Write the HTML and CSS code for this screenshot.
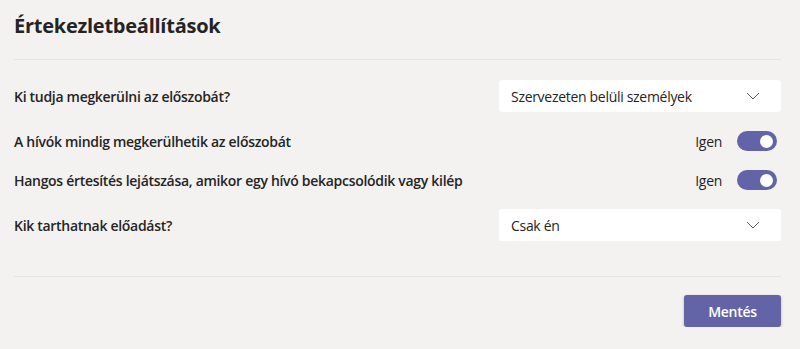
FILE: index.html
```html
<!DOCTYPE html>
<html lang="hu">
  <head>
    <meta charset="UTF-8" />
    <meta name="viewport" content="width=device-width, initial-scale=1.0" />
    <title>Értekezletbeállítások</title>
    <link rel="stylesheet" href="styles.css">
  </head>
  <body>
    <div class="settings">
      <h2 class="settings-title">Értekezletbeállítások</h2>

      <div class="settings-list">
        <div class="row row-select">
          <span class="row-label">Ki tudja megkerülni az előszobát?</span>
          <div class="select">
            <span>Szervezeten belüli személyek</span>
            <svg class="chevron" width="14" height="8" viewBox="0 0 14 8"><path d="M1 1l6 6 6-6" fill="none" stroke="#605e5c" stroke-width="1"/></svg>
          </div>
        </div>

        <div class="row row-toggle">
          <span class="row-label">A hívók mindig megkerülhetik az előszobát</span>
          <div class="toggle-wrap">
            <span class="toggle-text">Igen</span>
            <span class="toggle on"><span class="knob"></span></span>
          </div>
        </div>

        <div class="row row-toggle">
          <span class="row-label">Hangos értesítés lejátszása, amikor egy hívó bekapcsolódik vagy kilép</span>
          <div class="toggle-wrap">
            <span class="toggle-text">Igen</span>
            <span class="toggle on"><span class="knob"></span></span>
          </div>
        </div>

        <div class="row row-select">
          <span class="row-label">Kik tarthatnak előadást?</span>
          <div class="select">
            <span>Csak én</span>
            <svg class="chevron" width="14" height="8" viewBox="0 0 14 8"><path d="M1 1l6 6 6-6" fill="none" stroke="#605e5c" stroke-width="1"/></svg>
          </div>
        </div>
      </div>

      <div class="actions">
        <button type="button" class="save">Mentés</button>
      </div>
    </div>
  </body>
</html>
```

FILE: styles.css
```css
body {
  margin: 0;
  font-family: "Open Sans", "Noto Sans", sans-serif;
  letter-spacing: -0.3px;
  background-color: #f3f2f1;
  color: #252423;
}

.settings {
  padding: 0 19px 0 14px;
}

.settings-title {
  margin: 0;
  height: 60px;
  box-sizing: border-box;
  padding-top: 12px;
  font-size: 20px;
  font-weight: 700;
  line-height: 28px;
  letter-spacing: -0.25px;
  border-bottom: 1px solid #e5e4e3;
}

.settings-list {
  display: flex;
  flex-direction: column;
  gap: 19px;
  padding: 20px 0 35px;
  border-bottom: 1px solid #e5e4e3;
}

.row {
  display: flex;
  align-items: center;
  justify-content: space-between;
}

.row-select {
  height: 32px;
}

.row-toggle {
  height: 20px;
}

.row-label {
  font-size: 14px;
  font-weight: 600;
}

.select {
  width: 282px;
  height: 32px;
  box-sizing: border-box;
  padding: 0 21px 0 12px;
  display: flex;
  align-items: center;
  justify-content: space-between;
  background-color: white;
  border-radius: 3px;
  font-size: 14px;
}

.toggle-wrap {
  display: flex;
  align-items: center;
  gap: 15px;
  padding-right: 4px;
}

.toggle-text {
  font-size: 14px;
}

.toggle {
  width: 40px;
  height: 20px;
  border-radius: 10px;
  background-color: #6264a7;
  display: flex;
  align-items: center;
  justify-content: flex-end;
  padding: 0 4px;
  box-sizing: border-box;
}

.knob {
  width: 13px;
  height: 13px;
  border-radius: 50%;
  background-color: white;
}

.actions {
  display: flex;
  justify-content: flex-end;
  padding-top: 18px;
}

.save {
  width: 97px;
  height: 32px;
  border: none;
  border-radius: 3px;
  background-color: #6264a7;
  color: white;
  font-family: inherit;
  font-size: 14px;
  font-weight: 600;
  letter-spacing: -0.3px;
  box-shadow: 0 1px 3px rgba(0, 0, 0, 0.25);
  cursor: pointer;
}
```
